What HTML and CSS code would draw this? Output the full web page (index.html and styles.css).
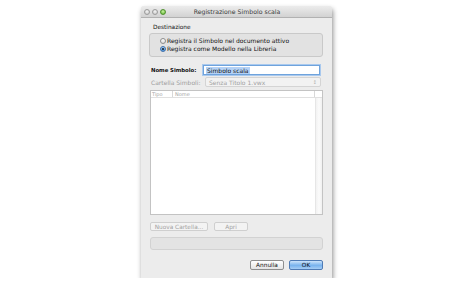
FILE: index.html
```html
<!DOCTYPE html>
<html>
<head>
<meta charset="utf-8">
<link rel="stylesheet" href="styles.css">
</head>
<body>
<div class="win">
  <div class="titlebar">
    <div class="lights"><span class="light"></span><span class="light"></span><span class="light green"></span></div>
    <div class="title">Registrazione Simbolo scala</div>
  </div>
  <div class="content">
    <div class="grp-label">Destinazione</div>
    <div class="group">
      <div class="radio"><span class="rb"></span>Registra il Simbolo nel documento attivo</div>
      <div class="radio"><span class="rb on"></span>Registra come Modello nella Libreria</div>
    </div>
    <div class="row r1">
      <div class="lbl bold">Nome Simbolo:</div>
      <div class="field"><span class="sel">Simbolo scala</span></div>
    </div>
    <div class="row r2">
      <div class="lbl dis">Cartella Simboli:</div>
      <div class="popup"><span>Senza Titolo 1.vwx</span><span class="arrows">&#8597;</span></div>
    </div>
    <div class="table">
      <div class="thead"><span class="c1">Tipo</span><span class="c2">Nome</span><span class="c3"></span></div>
      <div class="tbody"><div class="main"></div><div class="scroll"></div></div>
    </div>
    <div class="btnrow">
      <div class="btn dis wide">Nuova Cartella...</div>
      <div class="btn dis narrow">Apri</div>
    </div>
    <div class="progress"></div>
    <div class="actions">
      <div class="btn cancel">Annulla</div>
      <div class="btn ok">OK</div>
    </div>
  </div>
</div>
</body>
</html>
```
FILE: styles.css
```css
* { box-sizing: border-box; }
html, body { margin: 0; padding: 0; background: #fff; }
body {
  font-family: "DejaVu Sans", "Liberation Sans", sans-serif;
  font-size: 6px;
  color: #111;
  padding-top: 6px;
}
.win {
  margin-left: 141px;
  width: 191px;
  height: 272px;
  background: #ececec;
  box-shadow: 1px 3px 5px rgba(0,0,0,0.45);
  border-radius: 3px 3px 0 0;
  display: flex;
  flex-direction: column;
}
.titlebar {
  height: 12px;
  display: flex;
  align-items: center;
  background: linear-gradient(#ececec, #d2d2d2);
  border-bottom: 1px solid #b1b1b1;
  border-radius: 3px 3px 0 0;
}
.lights { display: flex; gap: 2px; padding-left: 3px; }
.light {
  width: 6px; height: 6px; border-radius: 50%;
  background: radial-gradient(circle at 50% 35%, #f4f4f4, #c4c4c4);
  border: 0.5px solid #9c9c9c;
}
.light.green { background: radial-gradient(circle at 50% 35%, #c8f2a0, #5cb42e); border-color: #4f8f2d; }
.title {
  flex: 1;
  text-align: center;
  color: #3b3b3b;
  font-size: 6.2px;
  margin-right: 24px;
}
.content {
  flex: 1;
  padding: 5px 9px 0 9px;
  display: flex;
  flex-direction: column;
}
.grp-label { height: 8px; line-height: 8px; padding-left: 3px; font-size: 5.8px; }
.group {
  margin-top: 2px;
  margin-left: -1px;
  height: 24px;
  border: 1px solid #c9c9c9;
  border-radius: 3px;
  background: #e2e2e2;
  padding: 3px 0 0 10px;
}
.radio { height: 8px; line-height: 8px; display: flex; align-items: center; font-size: 6px; }
.rb {
  width: 6px; height: 6px; border-radius: 50%;
  border: 0.6px solid #8d8d8d;
  background: linear-gradient(#fff, #dcdcdc);
  margin-right: 1px;
  display: inline-flex; align-items: center; justify-content: center;
}
.rb.on { background: linear-gradient(#a9d1f7, #4d94dc); border-color: #3f6fa8; }
.rb.on::after { content: ""; width: 2px; height: 2px; border-radius: 50%; background: #1a1a1a; }
.row { display: flex; align-items: center; height: 10px; }
.r1 { margin-top: 8px; }
.r2 { margin-top: 2px; }
.lbl { width: 53px; padding-left: 1px; font-size: 6px; }
.bold { font-weight: bold; font-size: 5.4px; letter-spacing: -0.05px; }
.dis { color: #9c9c9c; }
.field {
  width: 117px; height: 10px;
  background: #fff;
  border: 1px solid #6fa3dc;
  box-shadow: 0 0 0 1px #a9c9ee;
  padding-left: 2px;
  display: flex; align-items: center;
}
.sel { background: #b3d1f6; color: #111; padding: 0 1px; line-height: 7px; font-size: 6px; }
.popup {
  margin-left: 2px;
  width: 116px; height: 10px;
  border: 1px solid #d4d4d4;
  border-radius: 2px;
  background: #f2f2f2;
  color: #a0a0a0;
  display: flex; align-items: center; justify-content: space-between;
  padding: 0 3px 0 3px;
  font-size: 6px;
}
.arrows { font-size: 5px; color: #b0b0b0; }
.table {
  margin-top: 3px;
  height: 125px;
  border: 1px solid #c3c3c3;
  background: #fff;
  display: flex; flex-direction: column;
}
.thead {
  height: 7px;
  display: flex;
  border-bottom: 1px solid #e0e0e0;
  color: #a4a4a4;
  font-size: 5px;
  line-height: 6px;
}
.c1 { width: 22px; padding-left: 1px; border-right: 1px solid #d8d8d8; }
.c2 { flex: 1; padding-left: 2px; border-right: 1px solid #d8d8d8; }
.c3 { width: 7px; }
.tbody { flex: 1; display: flex; }
.main { flex: 1; }
.scroll {
  width: 7px;
  border-left: 1px solid #e6e6e6;
  background: linear-gradient(90deg, #f2f2f2, #fbfbfb 50%, #f0f0f0);
}
.btnrow { margin-top: 7px; display: flex; gap: 6px; }
.btn {
  height: 9px;
  border-radius: 2px;
  display: flex; align-items: center; justify-content: center;
  font-size: 5.8px;
}
.btn.dis { border: 1px solid #cfcfcf; background: #f3f3f3; color: #a2a2a2; }
.wide { width: 58px; }
.narrow { width: 34px; }
.progress {
  margin-top: 6px;
  height: 13px;
  border: 1px solid #d2d2d2;
  border-radius: 3px;
  background: #e3e3e3;
}
.actions { margin-top: 10px; display: flex; justify-content: flex-end; gap: 5px; }
.cancel {
  width: 34px; height: 10px;
  border: 1px solid #8e8e8e;
  background: linear-gradient(#ffffff, #e4e4e4);
  color: #111;
}
.ok {
  width: 34px; height: 10px;
  border: 1px solid #4f7bb5;
  background: linear-gradient(#cde4fb, #79b3ee 55%, #a6cdf5);
  color: #111;
}
```
